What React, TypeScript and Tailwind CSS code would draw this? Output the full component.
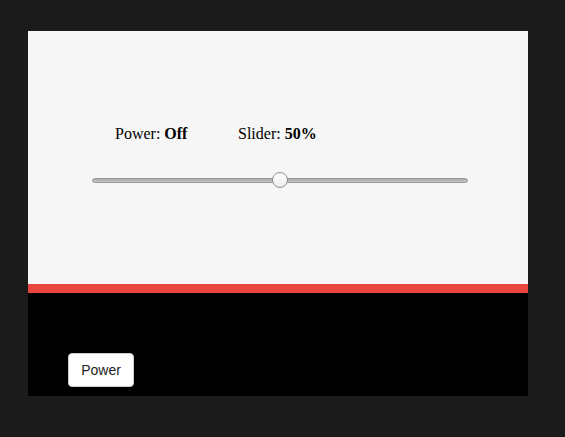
import React, { useState } from "react";

export default function App() {
  const [on, setOn] = useState(false);
  const [value, setValue] = useState(50);

  return (
    <div className="h-[437px] w-[565px] bg-[#1b1b1b] pl-[28px] pt-[31px]">
      <div className="w-[500px]">
        {/* Status + slider */}
        <div className="h-[253px] bg-[#f6f6f6] pt-[91px] font-['Liberation_Serif',serif] text-[16px] text-black">
          <div className="flex pl-[87px]">
            <span className="w-[123px]">
              Power: <b>{on ? "On" : "Off"}</b>
            </span>
            <span>
              Slider: <b>{value}%</b>
            </span>
          </div>
          <div className="relative ml-[64px] mt-[26px] h-[16px] w-[376px]">
            <div className="absolute left-0 right-0 top-[6px] h-[5px] rounded-full border border-[#9a9a9a] bg-gradient-to-b from-[#a8a8a8] to-[#c4c4c4]" />
            <div
              className="absolute top-0 h-[16px] w-[16px] rounded-full border border-[#8f8f8f] bg-gradient-to-b from-white to-[#ececec]"
              style={{ left: `calc(${value}% - 8px)` }}
            />
            <input
              type="range"
              min={0}
              max={100}
              value={value}
              onChange={(e) => setValue(Number(e.target.value))}
              className="absolute inset-0 h-full w-full cursor-pointer opacity-0"
            />
          </div>
        </div>
        <div className="h-[9px] bg-[#e8453c]" />
        {/* Controls */}
        <div className="h-[103px] bg-black pl-[40px] pt-[60px]">
          <button
            onClick={() => setOn(!on)}
            className="h-[34px] w-[66px] rounded-[4px] border border-[#ccc] bg-white font-['Liberation_Sans',sans-serif] text-[14px] text-[#222]"
          >
            Power
          </button>
        </div>
      </div>
    </div>
  );
}
